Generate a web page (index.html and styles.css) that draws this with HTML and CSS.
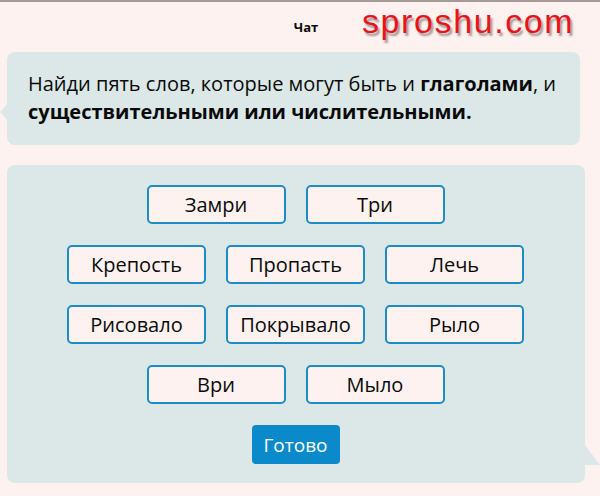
FILE: index.html
```html
<!DOCTYPE html>
<html lang="ru">
<head>
<meta charset="utf-8">
<title>Чат</title>
<link rel="stylesheet" href="styles.css">
</head>
<body>
<div class="page">
  <header class="top">
    <span class="title">Чат</span>
    <span class="mark">sproshu.com</span>
  </header>

  <div class="bubble bubble-left">
    <p class="task">Найди пять слов, которые могут быть и <b>глаголами</b>, и <b>существительными или числительными.</b></p>
  </div>

  <div class="bubble bubble-right">
    <div class="row">
      <button class="word">Замри</button>
      <button class="word">Три</button>
    </div>
    <div class="row">
      <button class="word">Крепость</button>
      <button class="word">Пропасть</button>
      <button class="word">Лечь</button>
    </div>
    <div class="row">
      <button class="word">Рисовало</button>
      <button class="word">Покрывало</button>
      <button class="word">Рыло</button>
    </div>
    <div class="row">
      <button class="word">Ври</button>
      <button class="word">Мыло</button>
    </div>
    <div class="row">
      <button class="done">Готово</button>
    </div>
  </div>
</div>
</body>
</html>
```

FILE: styles.css
```css
html, body {
  margin: 0;
  padding: 0;
}
body {
  background: #fdf2ef;
  font-family: "Open Sans", "Noto Sans", sans-serif;
  color: #0a0a0a;
  border-top: 2px solid #a39a98;
  height: 494px;
  overflow: hidden;
}
.page {
  padding: 0 15px 0 7px;
}
.top {
  position: relative;
  height: 50px;
  display: flex;
  justify-content: center;
  padding-left: 20px;
}
.title {
  font-weight: bold;
  font-size: 13px;
  margin-top: 16px;
}
.mark {
  position: absolute;
  left: 355px;
  top: 0;
  font-family: "Liberation Sans", Arial, sans-serif;
  font-size: 34px;
  color: #e8141c;
  letter-spacing: 1.6px;
  text-shadow: 2px 3px 2px rgba(90, 80, 80, 0.55);
}

.bubble {
  position: relative;
  background: #dce8e7;
  border-radius: 8px;
}
.bubble-left {
  width: 573px;
  height: 93px;
  box-sizing: border-box;
  padding: 18px 6px 0 21px;
}
.bubble-left::before {
  content: "";
  position: absolute;
  left: -7px;
  top: 52px;
  border-top: 8px solid transparent;
  border-bottom: 8px solid transparent;
  border-right: 7px solid #dce8e7;
}
.task {
  margin: 0;
  font-size: 20px;
  line-height: 28px;
}
.task b {
  font-weight: bold;
}

.bubble-right {
  margin-top: 20px;
  width: 578px;
  height: 318px;
  box-sizing: border-box;
  padding-top: 20px;
  display: flex;
  flex-direction: column;
  align-items: center;
  gap: 21px;
}
.bubble-right::after {
  content: "";
  position: absolute;
  right: -15px;
  bottom: 18px;
  width: 0;
  height: 0;
  border-left: 15px solid #dce8e7;
  border-top: 20px solid transparent;
}
.row {
  display: flex;
  gap: 21px;
  justify-content: center;
}
.word {
  width: 139px;
  height: 39px;
  box-sizing: border-box;
  border: 2px solid #1d8cc2;
  border-radius: 5px;
  background: #fdf2ef;
  font-family: "Open Sans", "Noto Sans", sans-serif;
  font-size: 20px;
  color: #0a0a0a;
  padding: 0;
  margin-left: -1px;
}
.done {
  height: 39px;
  width: 88px;
  padding: 0;
  border: none;
  border-radius: 4px;
  background: #0b8acb;
  color: #fff;
  font-family: "Open Sans", "Noto Sans", sans-serif;
  font-size: 19px;
  margin-left: -1px;
}
```
